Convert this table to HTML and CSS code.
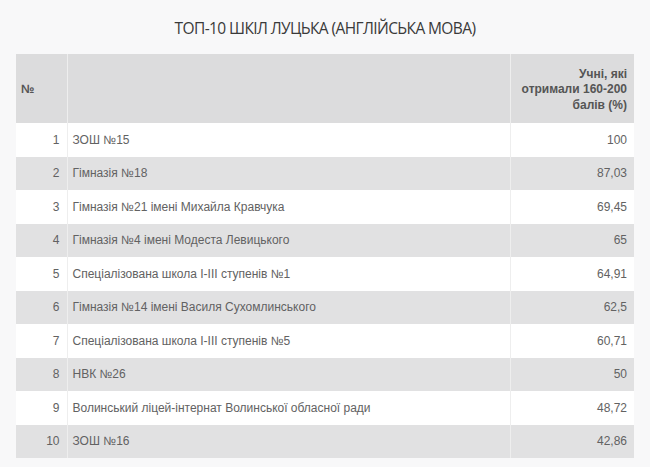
FILE: index.html
```html
<!DOCTYPE html>
<html lang="uk">
<head>
<meta charset="utf-8">
<title>ТОП-10 шкіл Луцька</title>
<link rel="stylesheet" href="styles.css">
</head>
<body>
<div class="page">
  <h1 class="title">ТОП-10 ШКІЛ ЛУЦЬКА (АНГЛІЙСЬКА МОВА)</h1>
  <table class="rank">
    <thead>
      <tr>
        <th class="c-num">№</th>
        <th class="c-name"></th>
        <th class="c-val">Учні, які<br>отримали 160-200<br>балів (%)</th>
      </tr>
    </thead>
    <tbody>
      <tr><td class="c-num">1</td><td class="c-name">ЗОШ №15</td><td class="c-val">100</td></tr>
      <tr><td class="c-num">2</td><td class="c-name">Гімназія №18</td><td class="c-val">87,03</td></tr>
      <tr><td class="c-num">3</td><td class="c-name">Гімназія №21 імені Михайла Кравчука</td><td class="c-val">69,45</td></tr>
      <tr><td class="c-num">4</td><td class="c-name">Гімназія №4 імені Модеста Левицького</td><td class="c-val">65</td></tr>
      <tr><td class="c-num">5</td><td class="c-name">Спеціалізована школа І-ІІІ ступенів №1</td><td class="c-val">64,91</td></tr>
      <tr><td class="c-num">6</td><td class="c-name">Гімназія №14 імені Василя Сухомлинського</td><td class="c-val">62,5</td></tr>
      <tr><td class="c-num">7</td><td class="c-name">Спеціалізована школа І-ІІІ ступенів №5</td><td class="c-val">60,71</td></tr>
      <tr><td class="c-num">8</td><td class="c-name">НВК №26</td><td class="c-val">50</td></tr>
      <tr><td class="c-num">9</td><td class="c-name">Волинський ліцей-інтернат Волинської обласної ради</td><td class="c-val">48,72</td></tr>
      <tr><td class="c-num">10</td><td class="c-name">ЗОШ №16</td><td class="c-val">42,86</td></tr>
    </tbody>
  </table>
</div>
</body>
</html>
```

FILE: styles.css
```css
html, body {
  margin: 0;
  padding: 0;
  background: #f8f8f9;
}

.page {
  padding: 16px 16px 0 16px;
  font-family: "Liberation Sans", Arial, sans-serif;
}

.title {
  margin: 0 0 14px 0;
  height: 24px;
  line-height: 25px;
  text-align: center;
  font-family: "Open Sans", "Liberation Sans", sans-serif;
  font-stretch: 90%;
  font-size: 15.5px;
  letter-spacing: -0.6px;
  font-weight: 500;
  color: #3a3a3a;
}

.rank {
  width: 618px;
  border-collapse: collapse;
  table-layout: fixed;
  font-size: 12px;
  color: #626262;
}

.rank th,
.rank td {
  border-left: 1px solid #eeeeee;
  border-right: 1px solid #eeeeee;
  padding: 0 7px 0 5px;
}

.rank th:first-child,
.rank td:first-child { border-left: none; }
.rank th:last-child,
.rank td:last-child { border-right: none; }

.rank thead tr {
  background: #dcdcdd;
  height: 69px;
}

.rank th {
  font-weight: bold;
  color: #555555;
  line-height: 15.5px;
  vertical-align: middle;
  padding-top: 3px;
}

.rank th.c-num { text-align: left; }
.rank th.c-val { text-align: right; padding-left: 7px; }

.rank tbody tr { height: 33.5px; background: #ffffff; }
.rank tbody tr:nth-child(even) { background: #e1e1e2; }

.c-num { width: 51px; text-align: right; box-sizing: border-box; }
.c-name { text-align: left; }
.c-val { width: 124px; text-align: right; box-sizing: border-box; }

.rank td { line-height: 16px; }
```
